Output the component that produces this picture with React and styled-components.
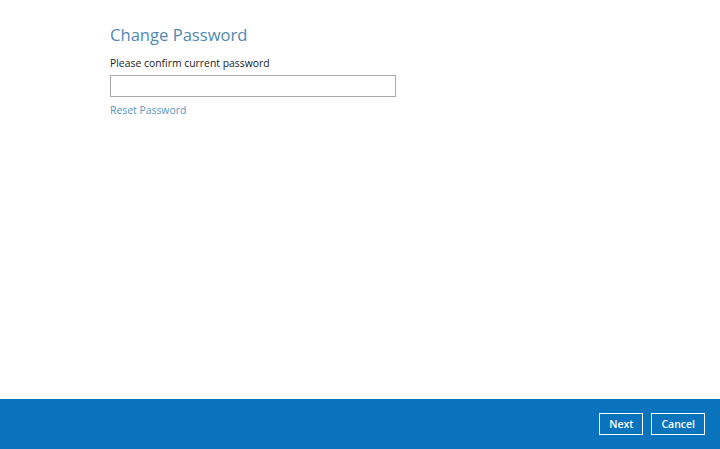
import React from "react";
import styled, { createGlobalStyle } from "styled-components";

const GlobalStyle = createGlobalStyle({
  "html, body": {
    margin: 0,
    padding: 0,
    height: "100%",
    background: "#ffffff",
  },
  "#root": {
    height: "100%",
  },
  "*": {
    boxSizing: "border-box",
  },
});

const Page = styled.div({
  display: "flex",
  flexDirection: "column",
  height: "100vh",
  fontFamily: '"Open Sans", "Noto Sans", sans-serif',
});

const Content = styled.main({
  flex: 1,
  display: "flex",
  flexDirection: "column",
  alignItems: "flex-start",
  padding: "22px 0 0 110px",
});

const Title = styled.h1({
  margin: 0,
  fontSize: "16.6px",
  fontWeight: 400,
  color: "#5189b3",
  lineHeight: "26px",
});

const Label = styled.label({
  marginTop: "8px",
  fontSize: "10.4px",
  color: "#222",
  lineHeight: "14px",
});

const Input = styled.input({
  marginTop: "5px",
  width: "286px",
  height: "22px",
  border: "1px solid #a9a9a9",
  outline: "none",
  padding: "0 6px",
  fontFamily: "inherit",
  fontSize: "11px",
});

const Link = styled.a({
  marginTop: "6px",
  fontSize: "10.4px",
  color: "#5a96c3",
  textDecoration: "none",
  lineHeight: "14px",
  cursor: "pointer",
});

const Footer = styled.footer({
  height: "50px",
  background: "#0a73bd",
  display: "flex",
  alignItems: "center",
  justifyContent: "flex-end",
  gap: "8px",
  padding: "0 15px 0 0",
});

const Button = styled.button({
  height: "22px",
  padding: "0 9px",
  background: "transparent",
  border: "1.5px solid #ffffff",
  color: "#ffffff",
  fontFamily: "inherit",
  fontSize: "10.5px",
  fontWeight: 600,
  cursor: "pointer",
  minWidth: ({ $wide }) => ($wide ? "53px" : "44px"),
});

export default function App() {
  return (
    <>
      <GlobalStyle />
      <Page>
        <Content>
          <Title>Change Password</Title>
          <Label htmlFor="current">Please confirm current password</Label>
          <Input id="current" type="password" />
          <Link>Reset Password</Link>
        </Content>
        <Footer>
          <Button>Next</Button>
          <Button $wide>Cancel</Button>
        </Footer>
      </Page>
    </>
  );
}
